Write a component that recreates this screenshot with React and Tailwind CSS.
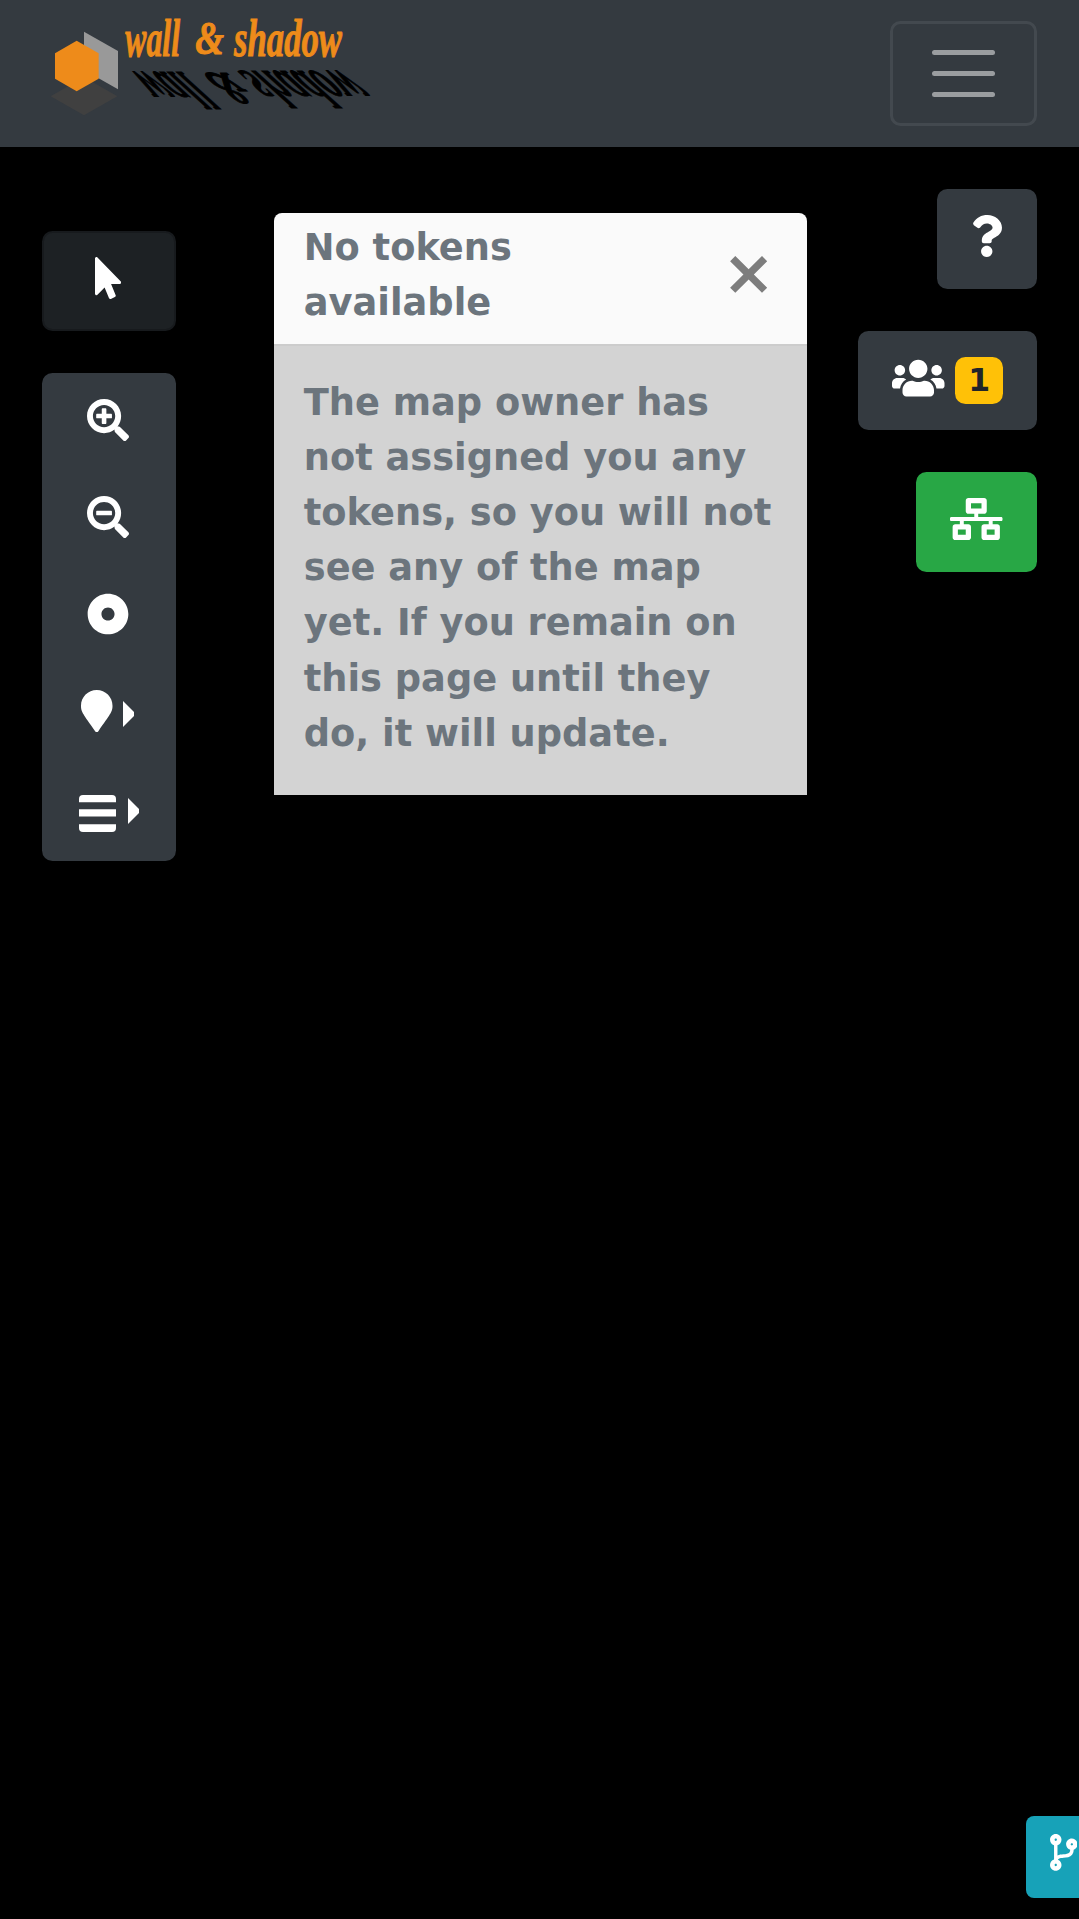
import React from "react";
import {
  FaMousePointer,
  FaSearchPlus,
  FaSearchMinus,
  FaDotCircle,
  FaMapMarker,
  FaQuestion,
  FaUsers,
  FaNetworkWired,
  FaCodeBranch,
} from "react-icons/fa";

function LogoWords() {
  return (
    <>
      <text x="286" y="167" textLength="164" lengthAdjust="spacingAndGlyphs">wall</text>
      <text x="496" y="162" textLength="86" lengthAdjust="spacingAndGlyphs" className="text-[138px]">&amp;</text>
      <text x="612" y="169" textLength="324" lengthAdjust="spacingAndGlyphs">shadow</text>
    </>
  );
}

function Logo() {
  return (
    <svg
      viewBox="0 0 1080 441"
      className="h-[147px] w-[360px] overflow-visible font-['Liberation_Serif',serif] text-[160px] font-bold italic"
      aria-label="wall & shadow"
    >
      <polygon points="62,289 162,232 262,289 162,346" fill="#404040" />
      <polygon points="162,95 264,153 264,268 162,210" fill="#999999" />
      <polygon points="140,122 206,160 206,236 140,274 75,236 75,160" fill="#ee8b1a" />
      <g fill="#000" stroke="#000" strokeWidth="3" transform="matrix(1 0 -1 -1 179 382)">
        <LogoWords />
      </g>
      <g fill="#ee8b1a" stroke="#ee8b1a" strokeWidth="3">
        <LogoWords />
      </g>
    </svg>
  );
}

function Caret() {
  return (
    <svg viewBox="0 0 11 26" className="h-[26px] w-[11px] fill-white">
      <path d="M0 0L11 11V15L0 26Z" />
    </svg>
  );
}

function ListIcon() {
  return (
    <svg viewBox="0 0 37 37" className="h-[37px] w-[37px] fill-white">
      <path d="M0 7.2V4Q0 0 4 0H33Q37 0 37 4V7.2Z" />
      <path d="M0 14.2H37V21.6H0Z" />
      <path d="M0 29.2H37V33Q37 37 33 37H4Q0 37 0 33Z" />
    </svg>
  );
}

function ToolButton({ children, className = "" }) {
  return (
    <button className={`flex h-[97.1px] justify-center pt-[26px] text-[42px] text-white ${className}`}>
      {children}
    </button>
  );
}

export default function App() {
  return (
    <div className="flex h-[1919px] w-[1079px] flex-col overflow-hidden bg-black font-['DejaVu_Sans',sans-serif] font-bold">
      <nav className="flex h-[147px] shrink-0 items-center justify-between bg-[#343a40] pr-[42px] pl-[30px]">
        <Logo />
        <button className="flex h-[105px] w-[147px] flex-col items-center justify-center gap-[15.7px] rounded-[10.5px] border-[3px] border-white/8">
          <span className="h-[5.3px] w-[63px] rounded-full bg-white/50" />
          <span className="h-[5.3px] w-[63px] rounded-full bg-white/50" />
          <span className="h-[5.3px] w-[63px] rounded-full bg-white/50" />
        </button>
      </nav>

      <main className="flex items-start pr-[42px] pl-[42px]">
        <div className="mt-[84px] flex w-[134px] flex-col gap-[42px]">
          <button className="flex h-[100px] justify-center rounded-[10.5px] border-2 border-[#171a1d] bg-[#1d2124] pt-[24px] text-[42px] text-white">
            <FaMousePointer className="-ml-[2.4px] w-[26.25px]" />
          </button>
          <div className="flex h-[488px] flex-col rounded-[10.5px] bg-[#343a40]">
            <ToolButton className="pr-[3px]"><FaSearchPlus /></ToolButton>
            <ToolButton className="pr-[3px]"><FaSearchMinus /></ToolButton>
            <ToolButton className="pr-[3px]"><FaDotCircle /></ToolButton>
            <ToolButton className="gap-[10px] pr-[3px]">
              <FaMapMarker className="w-[31.5px]" />
              <span className="pt-[11px]"><Caret /></span>
            </ToolButton>
            <ToolButton className="gap-[12.5px] pr-[0.5px]">
              <span className="pt-[8px]"><ListIcon /></span>
              <span className="pt-[11px]"><Caret /></span>
            </ToolButton>
          </div>
        </div>

        <section className="mt-[65.6px] ml-[97.6px] w-[533px] overflow-hidden rounded-t-[8px] text-[36.75px] leading-[55.125px] text-[#6c757d]">
          <header className="flex h-[133.8px] items-start justify-between border-b-2 border-[#cccccc] bg-[#fafafa] pt-[7.6px] pr-[31.5px] pl-[30.2px]">
            <strong className="w-[260px]">No tokens available</strong>
            <button className="mt-[21px] text-[63px] leading-[63px] text-[#7d7d7d]">×</button>
          </header>
          <p className="h-[449px] bg-[#d3d3d3] pt-[28.6px] pr-[28px] pl-[30.2px]">
            The map owner has<br />not assigned you any<br />tokens, so you will not<br />see any of the map<br />yet. If you remain on<br />this page until they<br />do, it will update.
          </p>
        </section>

        <div className="mt-[42px] ml-auto flex flex-col items-end gap-[42px] text-[42px] text-white">
          <button className="flex h-[99.5px] w-[99.75px] justify-center rounded-[10.5px] bg-[#343a40] pt-[26.25px]">
            <FaQuestion className="w-[31.5px]" />
          </button>
          <button className="flex h-[99.5px] w-[178.6px] justify-center gap-[10.5px] rounded-[10.5px] bg-[#343a40] pt-[26.25px]">
            <FaUsers className="w-[52.5px]" />
            <span className="flex h-[47.5px] w-[47.5px] justify-center rounded-[10.5px] bg-[#ffc107] text-[31.5px] leading-[46px] text-[#212529]">1</span>
          </button>
          <button className="flex h-[99.5px] w-[120.75px] justify-center rounded-[10.5px] bg-[#28a745] pt-[26.25px]">
            <FaNetworkWired className="w-[52.5px]" />
          </button>
        </div>
      </main>

      <footer className="mt-auto mb-[21.5px] flex justify-end">
        <button className="flex h-[81.5px] w-[53px] overflow-hidden rounded-l-[8px] bg-[#17a2b8] pt-[18px] pl-[23.5px] text-[36.75px] text-white">
          <FaCodeBranch className="w-[27.6px] shrink-0" />
        </button>
      </footer>
    </div>
  );
}
